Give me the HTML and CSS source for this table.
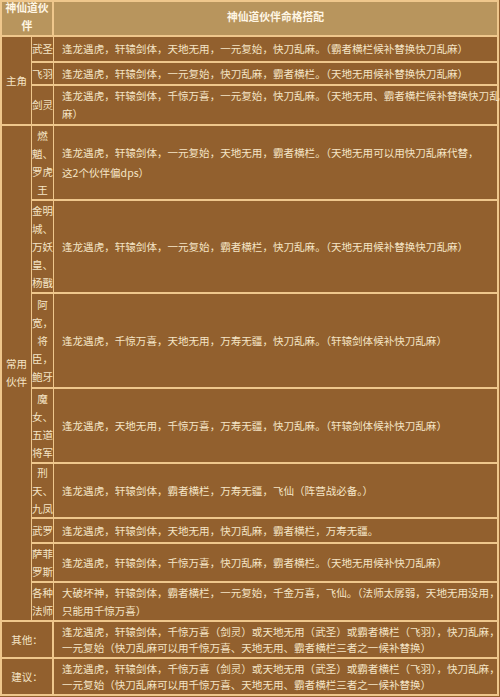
FILE: index.html
```html
<!DOCTYPE html>
<html lang="zh-CN">
<head>
<meta charset="utf-8">
<title>神仙道伙伴命格搭配</title>
<link rel="stylesheet" href="styles.css">
</head>
<body>
<div class="grid">
  <div class="cell head head-left span-cols">神仙道伙<br>伴</div>
  <div class="cell head head-main">神仙道伙伴命格搭配</div>

  <div class="cell group span-main">主角</div>
  <div class="cell name">武圣</div>
  <div class="cell desc">逢龙遇虎，轩辕剑体，天地无用，一元复始，快刀乱麻。（霸者横栏候补替换快刀乱麻）</div>
  <div class="cell name">飞羽</div>
  <div class="cell desc">逢龙遇虎，轩辕剑体，一元复始，快刀乱麻，霸者横栏。（天地无用候补替换快刀乱麻）</div>
  <div class="cell name">剑灵</div>
  <div class="cell desc">逢龙遇虎，轩辕剑体，千惊万喜，一元复始，快刀乱麻。（天地无用、霸者横栏候补替换快刀乱<br>麻）</div>

  <div class="cell group span-common">常用<br>伙伴</div>
  <div class="cell name">燃<br>魈、<br>罗虎<br>王</div>
  <div class="cell desc loose">逢龙遇虎，轩辕剑体，一元复始，天地无用，霸者横栏。（天地无用可以用快刀乱麻代替，<br>这2个伙伴偏dps）</div>
  <div class="cell name">金明<br>城、<br>万妖<br>皇、<br>杨戬</div>
  <div class="cell desc">逢龙遇虎，轩辕剑体，一元复始，霸者横栏，快刀乱麻。（天地无用候补替换快刀乱麻）</div>
  <div class="cell name">阿<br>宽，<br>将<br>臣，<br>鲍牙</div>
  <div class="cell desc">逢龙遇虎，千惊万喜，天地无用，万寿无疆，快刀乱麻。（轩辕剑体候补快刀乱麻）</div>
  <div class="cell name">魔<br>女、<br>五道<br>将军</div>
  <div class="cell desc">逢龙遇虎，天地无用，千惊万喜，万寿无疆，快刀乱麻。（轩辕剑体候补快刀乱麻）</div>
  <div class="cell name">刑<br>天、<br>九凤</div>
  <div class="cell desc">逢龙遇虎，轩辕剑体，霸者横栏，万寿无疆，飞仙（阵营战必备。）</div>
  <div class="cell name">武罗</div>
  <div class="cell desc">逢龙遇虎，轩辕剑体，天地无用，快刀乱麻，霸者横栏，万寿无疆。</div>
  <div class="cell name">萨菲<br>罗斯</div>
  <div class="cell desc">逢龙遇虎，轩辕剑体，千惊万喜，快刀乱麻，霸者横栏。（天地无用候补快刀乱麻）</div>
  <div class="cell name">各种<br>法师</div>
  <div class="cell desc">大破坏神，轩辕剑体，霸者横栏，一元复始，千金万喜，飞仙。（法师太孱弱，天地无用没用，<br>只能用千惊万喜）</div>

  <div class="cell group span-cols">其他：</div>
  <div class="cell desc tight">逢龙遇虎，轩辕剑体，千惊万喜（剑灵）或天地无用（武圣）或霸者横栏（飞羽），快刀乱麻，<br>一元复始（快刀乱麻可以用千惊万喜、天地无用、霸者横栏三者之一候补替换）</div>
  <div class="cell group span-cols">建议：</div>
  <div class="cell desc tight">逢龙遇虎，轩辕剑体，千惊万喜（剑灵）或天地无用（武圣）或霸者横栏（飞羽），快刀乱麻，<br>一元复始（快刀乱麻可以用千惊万喜、天地无用、霸者横栏三者之一候补替换）</div>
</div>
</body>
</html>
```

FILE: styles.css
```css
html, body {
  margin: 0;
  padding: 0;
  background: #93602d;
}

.grid {
  width: 499px;
  box-sizing: border-box;
  padding: 2px;
  display: grid;
  gap: 2px;
  grid-template-columns: 29px 19px 1fr;
  grid-template-rows: 33px 24px 21px 38px 73px 91px 93px 73px 53px 23px 37px 37px 35px 35px;
  background: #efc78c;
  font-family: "Noto Sans CJK SC", "Noto Sans", sans-serif;
  font-size: 10.55px;
  color: #f5e5c6;
}

.cell {
  background: #92602e;
  display: flex;
  flex-direction: column;
  justify-content: center;
  white-space: nowrap;
  min-width: 0;
}

.span-cols { grid-column: span 2; }
.span-main { grid-row: span 3; }
.span-common { grid-row: span 8; }

.head {
  background: #b8955d;
  color: #fff6e4;
  font-weight: bold;
  font-size: 10.8px;
  text-align: center;
  align-items: center;
}

.head-left {
  line-height: 18px;
  padding-bottom: 5px;
}

.head-main {
  padding-bottom: 6px;
}

.group {
  align-items: center;
  text-align: center;
  line-height: 18px;
}

.name {
  align-items: center;
  text-align: center;
  line-height: 18px;
  margin: 0 -1px;
  position: relative;
}

.desc {
  padding-left: 8px;
  line-height: 18px;
}

.desc.loose { line-height: 20px; }
.desc.tight { line-height: 16px; }
```
